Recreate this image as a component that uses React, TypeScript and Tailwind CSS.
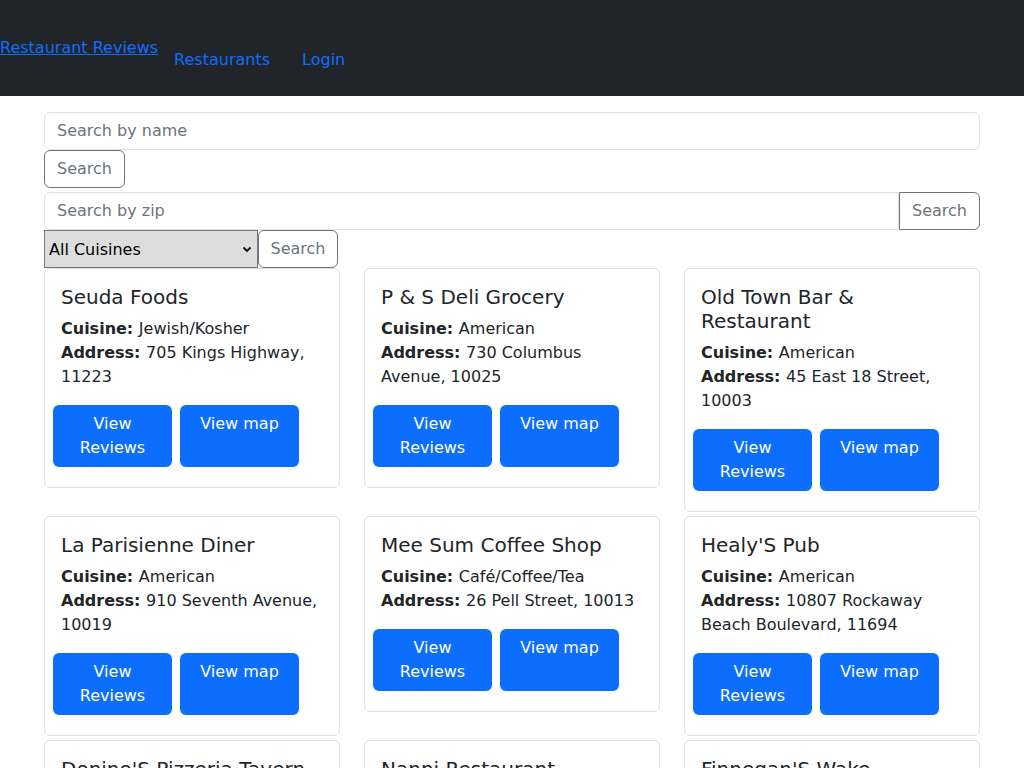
import React from "react";

type R = { name: string; cuisine: string; address: string };

const rows: R[] = [
  { name: "Seuda Foods", cuisine: "Jewish/Kosher", address: "705 Kings Highway, 11223" },
  { name: "P & S Deli Grocery", cuisine: "American", address: "730 Columbus Avenue, 10025" },
  { name: "Old Town Bar & Restaurant", cuisine: "American", address: "45 East 18 Street, 10003" },
  { name: "La Parisienne Diner", cuisine: "American", address: "910 Seventh Avenue, 10019" },
  { name: "Mee Sum Coffee Shop", cuisine: "Café/Coffee/Tea", address: "26 Pell Street, 10013" },
  { name: "Healy'S Pub", cuisine: "American", address: "10807 Rockaway Beach Boulevard, 11694" },
  { name: "Donino'S Pizzeria Tavern", cuisine: "Pizza/Italian", address: "2003 Emmons Avenue, 11235" },
  { name: "Nanni Restaurant", cuisine: "Italian", address: "146 East 46 Street, 10017" },
  { name: "Finnegan'S Wake", cuisine: "Irish", address: "1361 1 Avenue, 10021" },
];

function Card({ r }: { r: R }) {
  return (
    <div className="border border-[#dfdfdf] rounded-md bg-white">
      <div className="p-4">
        <h5 className="text-[20px] leading-[24px] mb-2 text-[#212529]">{r.name}</h5>
        <p className="text-[16px] leading-6 mb-4 text-[#212529]">
          <strong className="font-bold">Cuisine: </strong>
          {r.cuisine}
          <br />
          <strong className="font-bold">Address: </strong>
          {r.address}
        </p>
        <div className="-mx-2 flex gap-2 mb-1">
          <button className="w-[119px] h-[62px] rounded-md bg-[#0d6efd] text-white text-[16px] leading-6 px-3 py-[7px] flex flex-col items-center justify-start text-center">
            View Reviews
          </button>
          <button className="w-[119px] h-[62px] rounded-md bg-[#0d6efd] text-white text-[16px] leading-6 px-3 py-[7px] flex flex-col items-center justify-start text-center">
            View map
          </button>
        </div>
      </div>
    </div>
  );
}

export default function App() {
  return (
    <div className="min-h-screen bg-white font-['DejaVu_Sans',sans-serif] text-[16px] text-[#212529]">
      <nav className="h-24 bg-[#212529] flex items-start">
        <a href="#" className="mt-[36px] leading-6 text-[#0d6efd] underline">
          Restaurant Reviews
        </a>
        <div className="flex mt-[48px]">
          <a href="#" className="px-4 leading-6 text-[#0d6efd]">
            Restaurants
          </a>
          <a href="#" className="px-4 leading-6 text-[#0d6efd]">
            Login
          </a>
        </div>
      </nav>
      <div className="w-[936px] mx-auto pt-4">
        <input
          className="block w-full border border-[#dee2e6] rounded-md px-3 py-[6px] leading-6 text-[16px] placeholder:text-[#6c757d] bg-white outline-none"
          placeholder="Search by name"
        />
        <button className="block h-[38px] w-[81px] border border-[#6c757d] rounded-md text-[#6c757d] text-[16px]">
          Search
        </button>
        <div className="flex mt-1">
          <input
            className="flex-1 border border-[#dee2e6] rounded-l-md px-3 py-[6px] leading-6 text-[16px] placeholder:text-[#6c757d] bg-white outline-none"
            placeholder="Search by zip"
          />
          <button className="h-[38px] w-[81px] border border-[#6c757d] rounded-r-md text-[#6c757d] text-[16px]">
            Search
          </button>
        </div>
        <div className="flex">
          <div className="relative w-[214px] h-[38px]">
            <select className="appearance-none w-full h-full bg-[#dddddd] border border-[#767676] pl-1 pt-[2px] text-[16px] text-black outline-none">
              <option>All Cuisines</option>
            </select>
            <svg
              className="absolute right-[6px] top-[16px] pointer-events-none"
              width="10"
              height="7"
              viewBox="0 0 10 7"
            >
              <path d="M1.5 1.5 L5 5 L8.5 1.5" fill="none" stroke="#000" strokeWidth="1.8" />
            </svg>
          </div>
          <button className="h-[38px] w-[80px] border border-[#6c757d] rounded-md text-[#6c757d] text-[16px] bg-white">
            Search
          </button>
        </div>
        <div className="grid grid-cols-3 gap-x-6 gap-y-1 items-start">
          {rows.map((r) => (
            <Card key={r.name} r={r} />
          ))}
        </div>
      </div>
    </div>
  );
}
